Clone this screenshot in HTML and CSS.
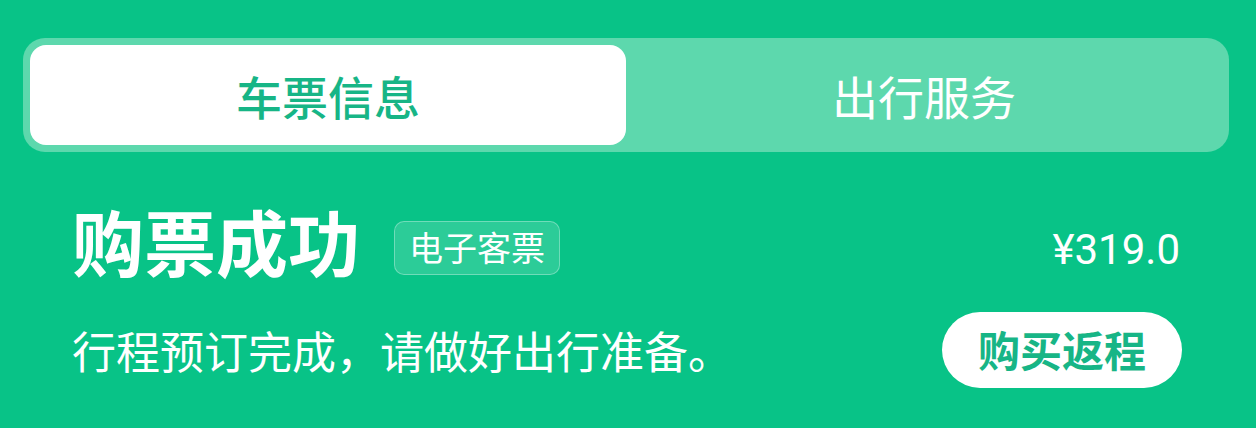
FILE: index.html
```html
<!DOCTYPE html>
<html lang="zh-CN">
<head>
<meta charset="utf-8">
<title>车票信息</title>
<link rel="stylesheet" href="styles.css">
</head>
<body>
<div class="page">
  <div class="tabs">
    <div class="tab tab-active">车票信息</div>
    <div class="tab">出行服务</div>
  </div>
  <div class="content">
    <div class="row row-top">
      <div class="title-group">
        <h1 class="title">购票成功</h1>
        <span class="badge">电子客票</span>
      </div>
      <div class="price">¥319.0</div>
    </div>
    <div class="row row-bottom">
      <p class="subtitle">行程预订完成，请做好出行准备。</p>
      <button class="btn">购买返程</button>
    </div>
  </div>
</div>
</body>
</html>
```

FILE: styles.css
```css
* { box-sizing: border-box; }
html, body {
  margin: 0;
  padding: 0;
  background: #08c387;
  width: 1256px;
  height: 428px;
  overflow: hidden;
  font-family: "Noto Sans CJK SC", "Noto Sans", sans-serif;
  color: #fff;
}
.page {
  padding: 38px 27px 0 23px;
}
.tabs {
  display: flex;
  height: 114px;
  padding: 7px;
  border-radius: 22px;
  background: #5dd8ad;
}
.tab {
  flex: 1;
  display: flex;
  align-items: center;
  justify-content: center;
  font-size: 46px;
  line-height: 1;
  font-weight: 400;
  color: #fff;
  border-radius: 16px;
}
.tab-active {
  background: #fff;
  color: #17b586;
  font-weight: 500;
}
.content {
  display: grid;
  row-gap: 28px;
  padding: 0 47px 0 49px;
  margin-top: 60px;
}
.row {
  display: flex;
  align-items: center;
  justify-content: space-between;
}
.row-top { height: 72px; }
.title-group {
  display: flex;
  align-items: center;
  gap: 34px;
}
.title {
  margin: 0 0 16px;
  font-size: 72px;
  line-height: 72px;
  font-weight: 700;
}
.badge {
  display: inline-flex;
  align-items: center;
  height: 54px;
  padding: 0 14px 2px;
  font-size: 34px;
  line-height: 1;
  border-radius: 10px;
  background: rgba(255, 255, 255, 0.15);
  border: 1px solid rgba(255, 255, 255, 0.32);
}
.price {
  font-family: Roboto, "Noto Sans", sans-serif;
  font-size: 42px;
  line-height: 1;
  margin-top: 4px;
  margin-right: 2px;
}
.subtitle {
  margin: 0;
  font-size: 44px;
  line-height: 1;
  margin-top: 0;
}
.btn {
  height: 76px;
  padding: 0 36px 2px;
  border: none;
  border-radius: 38px;
  background: #fff;
  color: #17b586;
  font-family: "Noto Sans CJK SC", sans-serif;
  font-size: 42px;
  font-weight: 700;
  line-height: 1;
}
```
